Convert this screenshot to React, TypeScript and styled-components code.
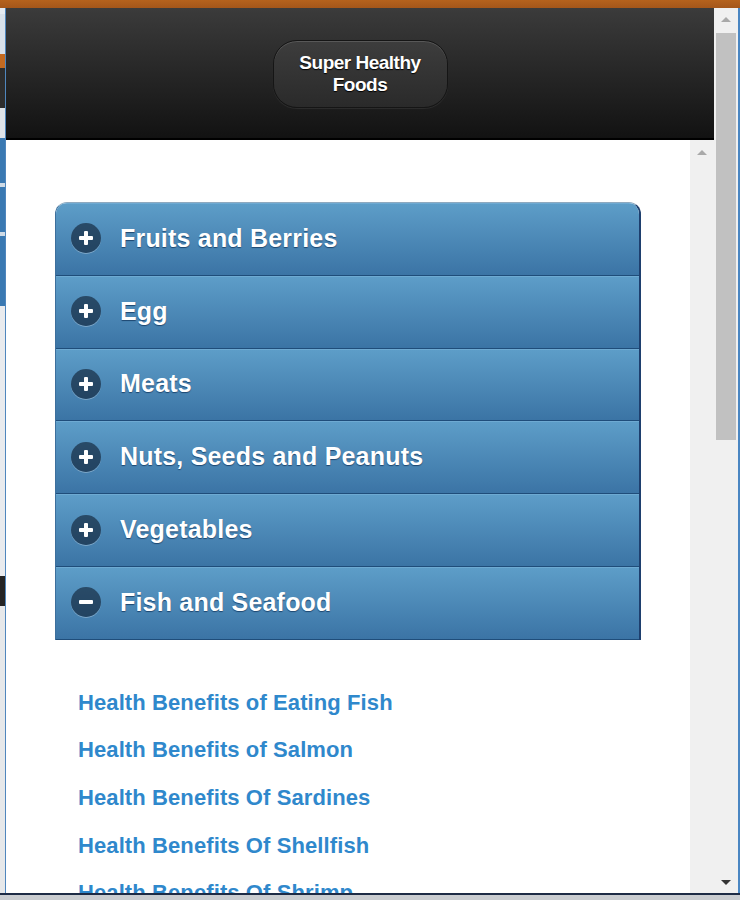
import { createGlobalStyle, styled } from 'styled-components';

const GlobalStyle = createGlobalStyle`
  html, body {
    margin: 0;
    padding: 0;
    overflow: hidden;
    background: #dcdcdc;
  }
  * {
    box-sizing: border-box;
  }
`;

const Screen = styled.div`
  width: 740px;
  height: 900px;
  display: flex;
  flex-direction: column;
  overflow: hidden;
  font-family: "Liberation Sans", Arial, Helvetica, sans-serif;
`;

const TopStrip = styled.div`
  height: 8px;
  flex: none;
  background: linear-gradient(#b5621d, #a4561a);
`;

const Middle = styled.div`
  height: 885px;
  flex: none;
  display: flex;
  min-height: 0;
`;

const LeftEdge = styled.div`
  width: 6px;
  flex: none;
  display: flex;
  flex-direction: column;
  border-right: 1px solid #4f86bd;
`;

const EdgeBlock = styled.div<{ $h: number; $c: string }>`
  height: ${(p) => p.$h}px;
  flex: none;
  background: ${(p) => p.$c};
`;

const Window = styled.div`
  width: 708px;
  flex: none;
  display: flex;
  flex-direction: column;
`;

const Header = styled.header`
  height: 132px;
  flex: none;
  display: flex;
  justify-content: center;
  align-items: flex-start;
  padding-top: 32px;
  background: linear-gradient(#3b3b3b, #121212);
  border-bottom: 2px solid #000;
`;

const TitleButton = styled.div`
  width: 175px;
  height: 68px;
  display: flex;
  align-items: center;
  justify-content: center;
  text-align: center;
  border-radius: 24px;
  border: 1px solid #151515;
  background: linear-gradient(#3d3d3d, #2a2a2a);
  box-shadow: inset 0 1px 0 rgba(255, 255, 255, 0.14), 0 1px 1px rgba(255, 255, 255, 0.08);
  color: #fff;
  font-size: 19px;
  font-weight: bold;
  line-height: 22px;
  letter-spacing: -0.5px;
  text-shadow: 0 1px 1px #000;
`;

const Body = styled.div`
  flex: 1;
  display: flex;
  min-height: 0;
`;

const Content = styled.main`
  width: 684px;
  flex: none;
  background: #fff;
  padding: 62px 49px 0;
  overflow: hidden;
`;

const CollapsibleSet = styled.div`
  display: flex;
  flex-direction: column;
  border-radius: 12px 12px 0 0;
  overflow: hidden;
  border-top: 1px solid #8ea9bf;
  border-right: 2px solid #1e3f6e;
  border-left: 1px solid #3d6f9c;
`;

const Heading = styled.div`
  height: 72.8px;
  flex: none;
  display: flex;
  align-items: center;
  gap: 19px;
  padding-left: 15px;
  padding-bottom: 2px;
  background: linear-gradient(#5d9dc8, #3b74a5);
  border-top: 1px solid #6eaad2;
  border-bottom: 1px solid #1f4d7a;
  color: #fff;
  font-size: 25px;
  font-weight: bold;
  letter-spacing: 0.2px;
  text-shadow: 0 1px 1px #1d466f;
`;

const IconCircle = styled.span`
  width: 30px;
  height: 30px;
  flex: none;
  border-radius: 50%;
  background: rgba(15, 30, 50, 0.62);
  box-shadow: 0 1px 0 rgba(255, 255, 255, 0.3);
  display: flex;
  align-items: center;
  justify-content: center;
`;

const LinkList = styled.ul`
  list-style: none;
  margin: 0;
  padding: 39px 0 0 23px;
`;

const LinkItem = styled.li`
  line-height: 47.6px;
  font-size: 22px;
  font-weight: bold;
  letter-spacing: 0.1px;
  color: #2f88cc;
  white-space: nowrap;
`;

const Scrollbar = styled.div<{ $outer?: boolean }>`
  width: ${(p) => (p.$outer ? 26 : 24)}px;
  flex: none;
  display: flex;
  flex-direction: column;
  align-items: center;
  background: #f0f0f0;
  border-right: ${(p) => (p.$outer ? '2px solid #4a86c2' : 'none')};
  padding: ${(p) => (p.$outer ? '9px 0 8px' : '10px 0 0')};
`;

const Arrow = styled.div<{ $down?: boolean }>`
  width: 0;
  height: 0;
  flex: none;
  border-left: 5px solid transparent;
  border-right: 5px solid transparent;
  ${(p) =>
    p.$down ? 'border-top: 5px solid #333;' : 'border-bottom: 5px solid #a9a9a9;'}
`;

const Thumb = styled.div`
  width: 20px;
  height: 407px;
  margin-top: 11px;
  flex: none;
  background: #c1c1c1;
`;

const Spacer = styled.div`
  flex: 1;
`;

const BottomLine = styled.div`
  height: 2px;
  flex: none;
  background: #1d2b45;
`;

const BottomGray = styled.div`
  flex: 1;
  background: #c9ccd0;
`;

function ToggleIcon({ open }: { open: boolean }) {
  return (
    <IconCircle>
      <svg width="16" height="16" viewBox="0 0 16 16">
        <rect x="1" y="6" width="14" height="4" rx="1" fill="#fff" />
        {!open && <rect x="6" y="1" width="4" height="14" rx="1" fill="#fff" />}
      </svg>
    </IconCircle>
  );
}

const sections = [
  { title: 'Fruits and Berries', open: false },
  { title: 'Egg', open: false },
  { title: 'Meats', open: false },
  { title: 'Nuts, Seeds and Peanuts', open: false },
  { title: 'Vegetables', open: false },
  { title: 'Fish and Seafood', open: true },
];

const links = [
  'Health Benefits of Eating Fish',
  'Health Benefits of Salmon',
  'Health Benefits Of Sardines',
  'Health Benefits Of Shellfish',
  'Health Benefits Of Shrimp',
];

const edge = [
  { h: 6, c: '#e6ebf1' },
  { h: 40, c: '#d9e1ea' },
  { h: 14, c: '#c46a20' },
  { h: 40, c: '#2d2d2d' },
  { h: 30, c: '#dfe3e8' },
  { h: 45, c: '#3a79b2' },
  { h: 4, c: '#d0dbe6' },
  { h: 45, c: '#3a79b2' },
  { h: 4, c: '#d0dbe6' },
  { h: 70, c: '#3a79b2' },
  { h: 270, c: '#e9ebee' },
  { h: 30, c: '#242424' },
];

export default function App() {
  return (
    <>
      <GlobalStyle />
      <Screen>
        <TopStrip />
        <Middle>
          <LeftEdge>
            {edge.map((b, i) => (
              <EdgeBlock key={i} $h={b.h} $c={b.c} />
            ))}
            <EdgeBlock $h={400} $c="#e6e8ea" />
          </LeftEdge>
          <Window>
            <Header>
              <TitleButton>
                Super Healthy
                <br />
                Foods
              </TitleButton>
            </Header>
            <Body>
              <Content>
                <CollapsibleSet>
                  {sections.map((s) => (
                    <Heading key={s.title}>
                      <ToggleIcon open={s.open} />
                      {s.title}
                    </Heading>
                  ))}
                </CollapsibleSet>
                <LinkList>
                  {links.map((l) => (
                    <LinkItem key={l}>{l}</LinkItem>
                  ))}
                </LinkList>
              </Content>
              <Scrollbar>
                <Arrow />
              </Scrollbar>
            </Body>
          </Window>
          <Scrollbar $outer>
            <Arrow />
            <Thumb />
            <Spacer />
            <Arrow $down />
          </Scrollbar>
        </Middle>
        <BottomLine />
        <BottomGray />
      </Screen>
    </>
  );
}
